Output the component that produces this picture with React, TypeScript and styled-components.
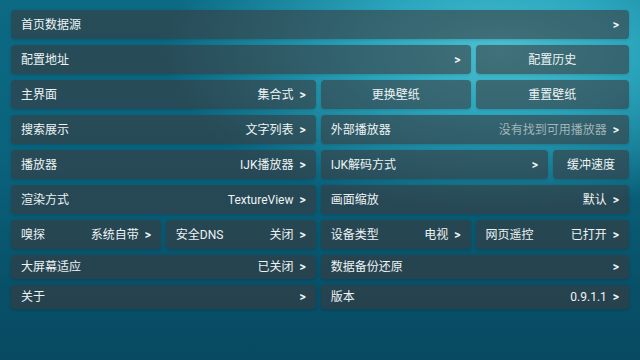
import React from "react";
import styled, { createGlobalStyle } from "styled-components";

const GlobalStyle = createGlobalStyle`
  html, body {
    margin: 0;
    padding: 0;
    width: 640px;
    height: 360px;
    overflow: hidden;
  }
  body {
    font-family: Roboto, "Noto Sans CJK SC", sans-serif;
  }
`;

type Item = {
  label?: string;
  value?: string;
  muted?: boolean;
  arrow?: boolean;
  center?: boolean;
  span: number;
};

const rows: Item[][] = [
  [{ label: "首页数据源", arrow: true, span: 8 }],
  [
    { label: "配置地址", arrow: true, span: 6 },
    { label: "配置历史", center: true, span: 2 },
  ],
  [
    { label: "主界面", value: "集合式", arrow: true, span: 4 },
    { label: "更换壁纸", center: true, span: 2 },
    { label: "重置壁纸", center: true, span: 2 },
  ],
  [
    { label: "搜索展示", value: "文字列表", arrow: true, span: 4 },
    { label: "外部播放器", value: "没有找到可用播放器", muted: true, arrow: true, span: 4 },
  ],
  [
    { label: "播放器", value: "IJK播放器", arrow: true, span: 4 },
    { label: "IJK解码方式", arrow: true, span: 3 },
    { label: "缓冲速度", center: true, span: 1 },
  ],
  [
    { label: "渲染方式", value: "TextureView", arrow: true, span: 4 },
    { label: "画面缩放", value: "默认", arrow: true, span: 4 },
  ],
  [
    { label: "嗅探", value: "系统自带", arrow: true, span: 2 },
    { label: "安全DNS", value: "关闭", arrow: true, span: 2 },
    { label: "设备类型", value: "电视", arrow: true, span: 2 },
    { label: "网页遥控", value: "已打开", arrow: true, span: 2 },
  ],
  [
    { label: "大屏幕适应", value: "已关闭", arrow: true, span: 4 },
    { label: "数据备份还原", arrow: true, span: 4 },
  ],
  [
    { label: "关于", arrow: true, span: 4 },
    { label: "版本", value: "0.9.1.1", arrow: true, span: 4 },
  ],
];

const App = () => {
  return (
    <>
      <GlobalStyle />
      <Screen>
        <Grid>
          {rows.flat().map((it, i) => (
            <Tile key={i} $span={it.span} $center={it.center}>
              <Label>{it.label}</Label>
              {!it.center && (
                <Value $muted={it.muted}>
                  {it.value}
                  {it.arrow && <Chevron>&gt;</Chevron>}
                </Value>
              )}
            </Tile>
          ))}
        </Grid>
      </Screen>
    </>
  );
};

const Screen = styled.div`
  width: 640px;
  height: 360px;
  box-sizing: border-box;
  padding: 10px 11px 0 11px;
  background:
    radial-gradient(
      ellipse 70% 60% at 78% 14%,
      #4cc2d2 0%,
      #2ba6bd 30%,
      rgba(20, 130, 155, 0) 75%
    ),
    linear-gradient(180deg, #0c6a84 0%, #0a627c 45%, #085068 80%, #074a62 100%);
`;

const Grid = styled.div`
  display: grid;
  grid-template-columns: repeat(7, 1fr) 76px;
  grid-template-rows: repeat(7, 29px) 24px 24px;
  column-gap: 5px;
  row-gap: 6px;
`;

const Tile = styled.div<{ $span: number; $center?: boolean }>`
  grid-column: span ${(p) => p.$span};
  display: flex;
  align-items: center;
  justify-content: ${(p) => (p.$center ? "center" : "space-between")};
  padding: 0 10px;
  border-radius: 4px;
  background: rgba(58, 58, 62, 0.6);
  box-shadow: 0 1px 3px rgba(0, 0, 0, 0.15);
  color: #eef3f4;
  font-size: 12px;
  white-space: nowrap;
  overflow: hidden;
`;

const Label = styled.span`
  line-height: 1;
`;

const Value = styled.span<{ $muted?: boolean }>`
  display: flex;
  align-items: center;
  color: ${(p) => (p.$muted ? "#a3b4b8" : "#eef3f4")};
  line-height: 1;
`;

const Chevron = styled.span`
  margin-left: 6px;
  color: #eef3f4;
  font-weight: 700;
  font-size: 12px;
`;

export default App;
